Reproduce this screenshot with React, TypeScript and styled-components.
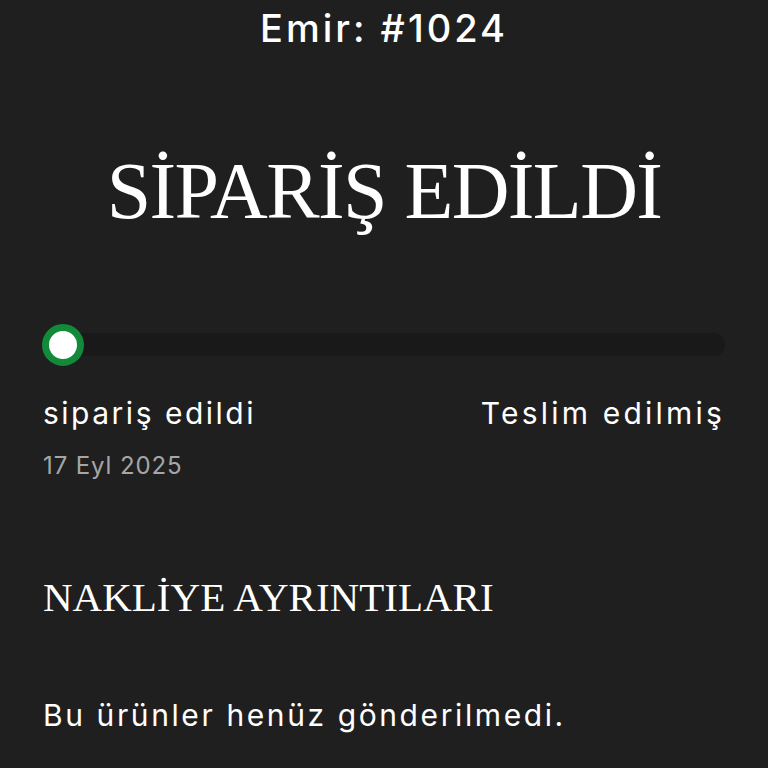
import React from 'react';
import styled, {createGlobalStyle} from 'styled-components';

const GlobalStyle = createGlobalStyle`
  html, body {
    margin: 0;
    padding: 0;
    background: #1f1f1f;
  }
`

const Page = styled.div`
  width: 768px;
  min-height: 768px;
  box-sizing: border-box;
  padding: 0 43px;
  background: #1f1f1f;
  color: #ffffff;
  font-family: Inter, "Noto Sans", sans-serif;
  overflow: hidden;
`

const OrderNumber = styled.h1`
  margin: 0;
  padding-top: 4px;
  text-align: center;
  font-size: 38px;
  font-weight: 500;
  line-height: 48px;
  letter-spacing: 3px;
`

const StatusTitle = styled.h2`
  margin: 94px 0 0;
  text-align: center;
  font-family: "Liberation Serif", "DejaVu Serif", serif;
  font-weight: 400;
  font-size: 80px;
  line-height: 90px;
  letter-spacing: -1.6px;
`

const Track = styled.div`
  margin-top: 97px;
  height: 23px;
  border-radius: 12px;
  background: #191919;
  display: flex;
  align-items: center;
`

const Dot = styled.div<{ $done: boolean }>`
  width: 28px;
  height: 28px;
  margin-left: -1px;
  border-radius: 50%;
  background: #ffffff;
  border: 7px solid ${({$done}) => ($done ? '#138a3a' : '#555555')};
  flex: none;
`

const StepRow = styled.div`
  margin-top: 39px;
  display: flex;
  justify-content: space-between;
  align-items: flex-start;
`

const Step = styled.div<{ $align: 'left' | 'right' }>`
  display: flex;
  flex-direction: column;
  gap: 21px;
  text-align: ${({$align}) => $align};
`

const StepLabel = styled.span<{ $spacing: number }>`
  font-size: 30px;
  line-height: 36px;
  font-weight: 400;
  letter-spacing: ${({$spacing}) => $spacing}px;
`

const StepDate = styled.span`
  font-size: 24px;
  line-height: 28px;
  color: #a6a6a6;
  letter-spacing: 0.9px;
`

const SectionTitle = styled.h3`
  margin: 93px 0 0;
  font-family: "Liberation Serif", "DejaVu Serif", serif;
  font-weight: 400;
  font-size: 41px;
  line-height: 48px;
`

const Notice = styled.p`
  margin: 76px 0 0;
  font-size: 30px;
  line-height: 36px;
  letter-spacing: 2.6px;
`

interface StepInfo {
    label: string,
    date: string|null,
    spacing: number
}

const steps: StepInfo[] = [
    {label: 'sipariş edildi', date: '17 Eyl 2025', spacing: 2.5},
    {label: 'Teslim edilmiş', date: null, spacing: 3.2},
]

const App: React.FC = () => {
    return (
        <Page>
            <GlobalStyle/>
            <OrderNumber>Emir: #1024</OrderNumber>
            <StatusTitle>SİPARİŞ EDİLDİ</StatusTitle>
            <Track>
                <Dot $done={true}/>
            </Track>
            <StepRow>
                {steps.map((step, i) => (
                    <Step key={step.label} $align={i === 0 ? 'left' : 'right'}>
                        <StepLabel $spacing={step.spacing}>{step.label}</StepLabel>
                        {step.date && <StepDate>{step.date}</StepDate>}
                    </Step>
                ))}
            </StepRow>
            <SectionTitle>NAKLİYE AYRINTILARI</SectionTitle>
            <Notice>Bu ürünler henüz gönderilmedi.</Notice>
        </Page>
    )
}

export default App
